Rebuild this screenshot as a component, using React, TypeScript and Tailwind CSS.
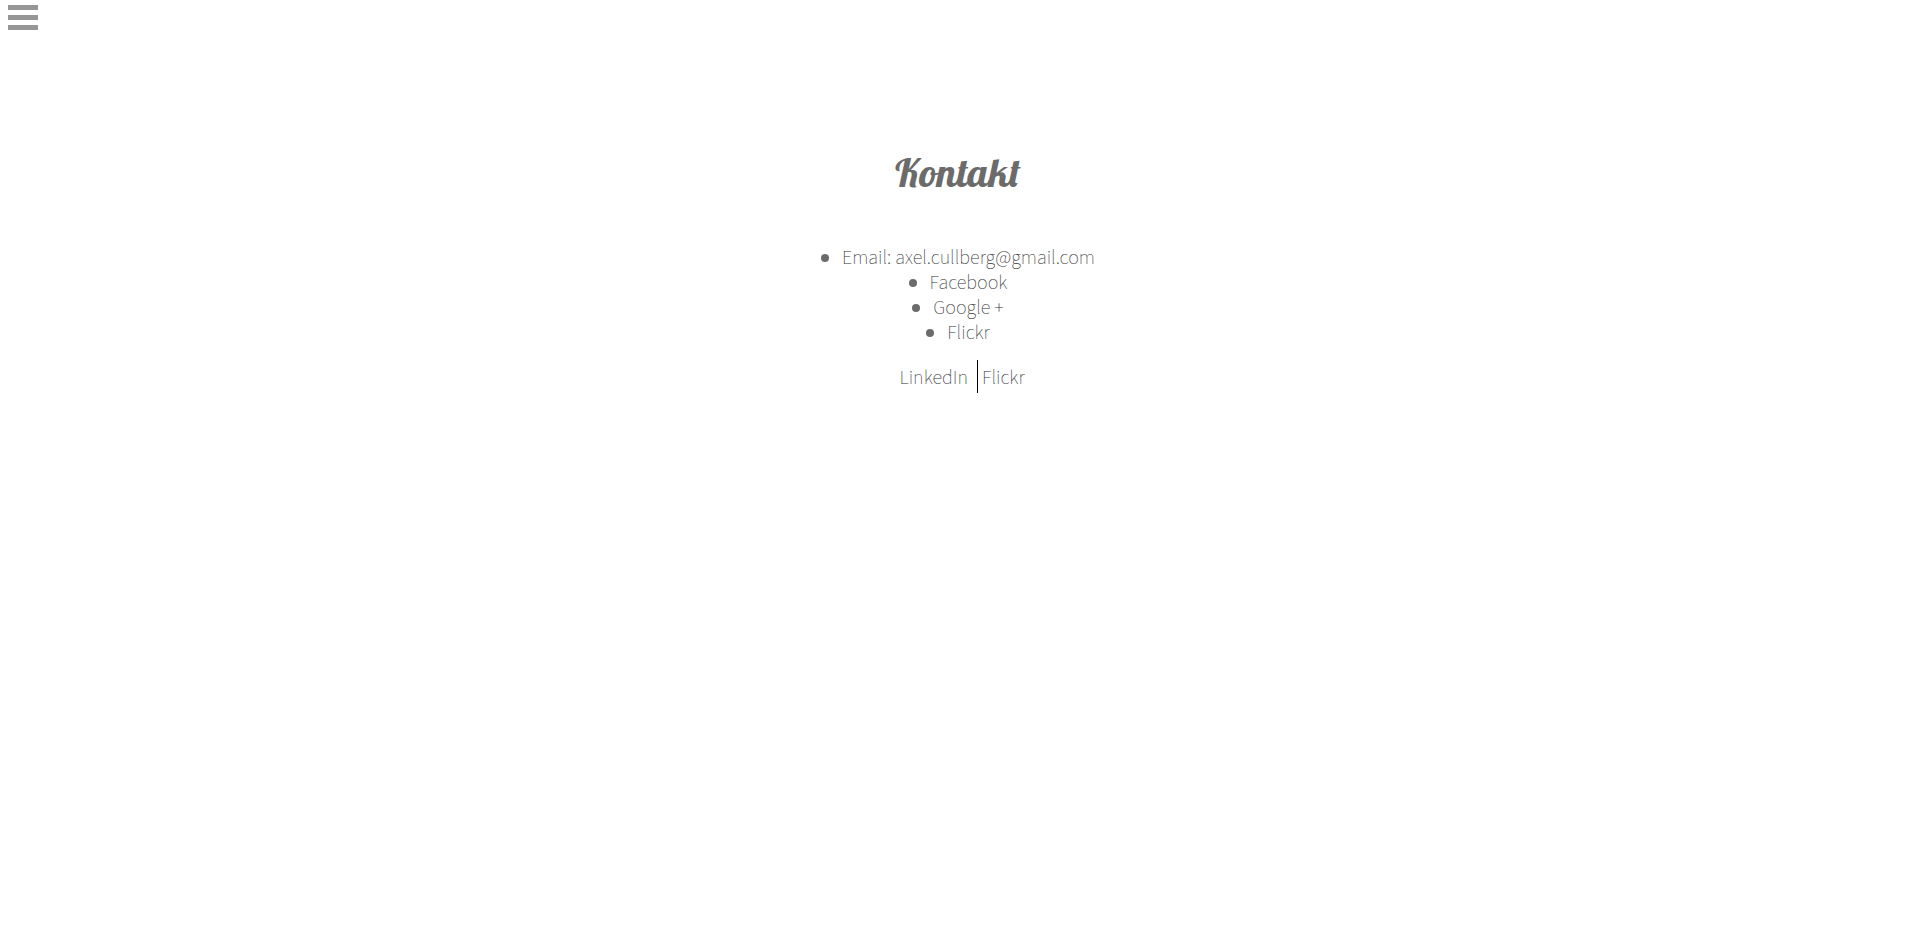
const channels = ['Email: axel.cullberg@gmail.com', 'Facebook', 'Google +', 'Flickr'];

export default function App() {
  return (
    <div className="min-h-screen bg-white font-['Source_Sans_Pro','Source_Sans_3','Noto_Sans_CJK_SC',sans-serif] text-[20px] font-extralight leading-[25px] text-[#333333]">
      <header className="flex h-8 px-2 pt-[5px]">
        <button type="button" aria-label="Menu" className="flex h-[25px] w-[30px] flex-col justify-between">
          <span className="h-[5px] w-full bg-[#969696]" />
          <span className="h-[5px] w-full bg-[#969696]" />
          <span className="h-[5px] w-full bg-[#969696]" />
        </button>
      </header>
      <main className="flex flex-col items-center pt-[115px] pl-[2px] text-center">
        <h1 className="font-['Lobster','Liberation_Serif',serif] text-[40px] font-normal leading-[50px] text-[#6b6b6b]">Kontakt</h1>
        <ul className="mt-[49px]">
          {channels.map((channel) => (
            <li
              key={channel}
              className="flex items-center justify-center gap-[13px] before:mb-[2px] before:size-2 before:rounded-full before:bg-[#6b6b6b]"
            >
              {channel}
            </li>
          ))}
        </ul>
        <nav aria-label="Profiles" className="mt-[14px] flex items-center pl-2 leading-[29px]">
          <a href="#linkedin" className="border-r border-black pt-1 pr-[9px]">LinkedIn</a>
          <a href="#flickr" className="pt-1 pl-1">Flickr</a>
        </nav>
      </main>
    </div>
  );
}
